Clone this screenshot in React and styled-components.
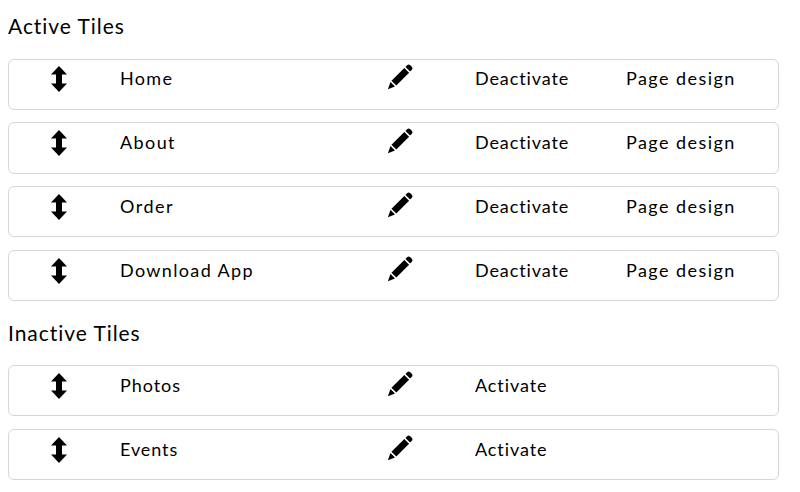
import React from 'react'
import styled, { createGlobalStyle } from 'styled-components'

const GlobalStyle = createGlobalStyle`
  * {
    box-sizing: border-box;
  }

  body {
    margin: 0;
    background: #fff;
    color: #000;
    font-family: Lato, 'Open Sans', sans-serif;
  }
`

const Page = styled.main`
  width: 779px;
  padding: 12px 0 0 8px;
`

const Heading = styled.h2`
  height: 28px;
  margin: 0 0 ${({ $gap }) => $gap}px;
  font-size: 21px;
  font-weight: 400;
  line-height: 28px;
  letter-spacing: ${({ $spacing }) => $spacing}px;
`

const TileList = styled.ul`
  display: flex;
  flex-direction: column;
  gap: 12.65px;
  margin: 0 0 ${({ $gap }) => $gap || 0}px;
  padding: 0;
  list-style: none;
`

const Tile = styled.li`
  display: grid;
  grid-template-columns: 111px 267px 88px 151px 1fr;
  align-items: start;
  height: 51.15px;
  border: 1px solid #d6d6d6;
  border-radius: 6px;
`

const Cell = styled.span`
  padding-top: 6.8px;
  font-size: 18px;
  line-height: 24px;
  letter-spacing: ${({ $spacing }) => $spacing}px;
  white-space: nowrap;
`

const DragHandle = styled.svg`
  width: 18px;
  height: 28px;
  margin: 5.8px 0 0 41px;
`

const EditIcon = styled.svg`
  width: 26px;
  height: 26px;
  margin-top: 4.8px;
`

const activeTiles = [
  { name: 'Home', spacing: 1.3 },
  { name: 'About', spacing: 1.4 },
  { name: 'Order', spacing: 1.5 },
  { name: 'Download App', spacing: 1.35 },
]

const inactiveTiles = [
  { name: 'Photos', spacing: 0.95 },
  { name: 'Events', spacing: 0.9 },
]

const TileRow = ({ tile, active = false }) => (
  <Tile>
    <DragHandle viewBox="0 0 18 28">
      <path d="M9 1 L17 9.6 H12 V18.4 H17 L9 27 L1 18.4 H6 V9.6 H1 Z" />
    </DragHandle>
    <Cell $spacing={tile.spacing}>{tile.name}</Cell>
    <EditIcon viewBox="0 0 26 26">
      <path d="M18.5 2.9 L20.4 1 Q21.8 -0.1 23.2 1.2 L24.8 2.8 Q26 4.2 25 5.6 L23.1 7.5 Z" />
      <path d="M17.3 3.9 L22.1 8.7 L9.3 21.5 L4.5 16.7 Z" />
      <path d="M3.5 18 L8 22.5 L0.9 25.2 Z" />
    </EditIcon>
    <Cell $spacing={0.9}>{active ? 'Deactivate' : 'Activate'}</Cell>
    {active && <Cell $spacing={1.45}>Page design</Cell>}
  </Tile>
)

const App = () => (
  <>
    <GlobalStyle />
    <Page>
      <Heading $gap={18.65} $spacing={0.95}>Active Tiles</Heading>
      <TileList $gap={17.8}>
        {activeTiles.map((tile) => (
          <TileRow key={tile.name} tile={tile} active />
        ))}
      </TileList>
      <Heading $gap={18} $spacing={0.95}>Inactive Tiles</Heading>
      <TileList>
        {inactiveTiles.map((tile) => (
          <TileRow key={tile.name} tile={tile} />
        ))}
      </TileList>
    </Page>
  </>
)

export default App
